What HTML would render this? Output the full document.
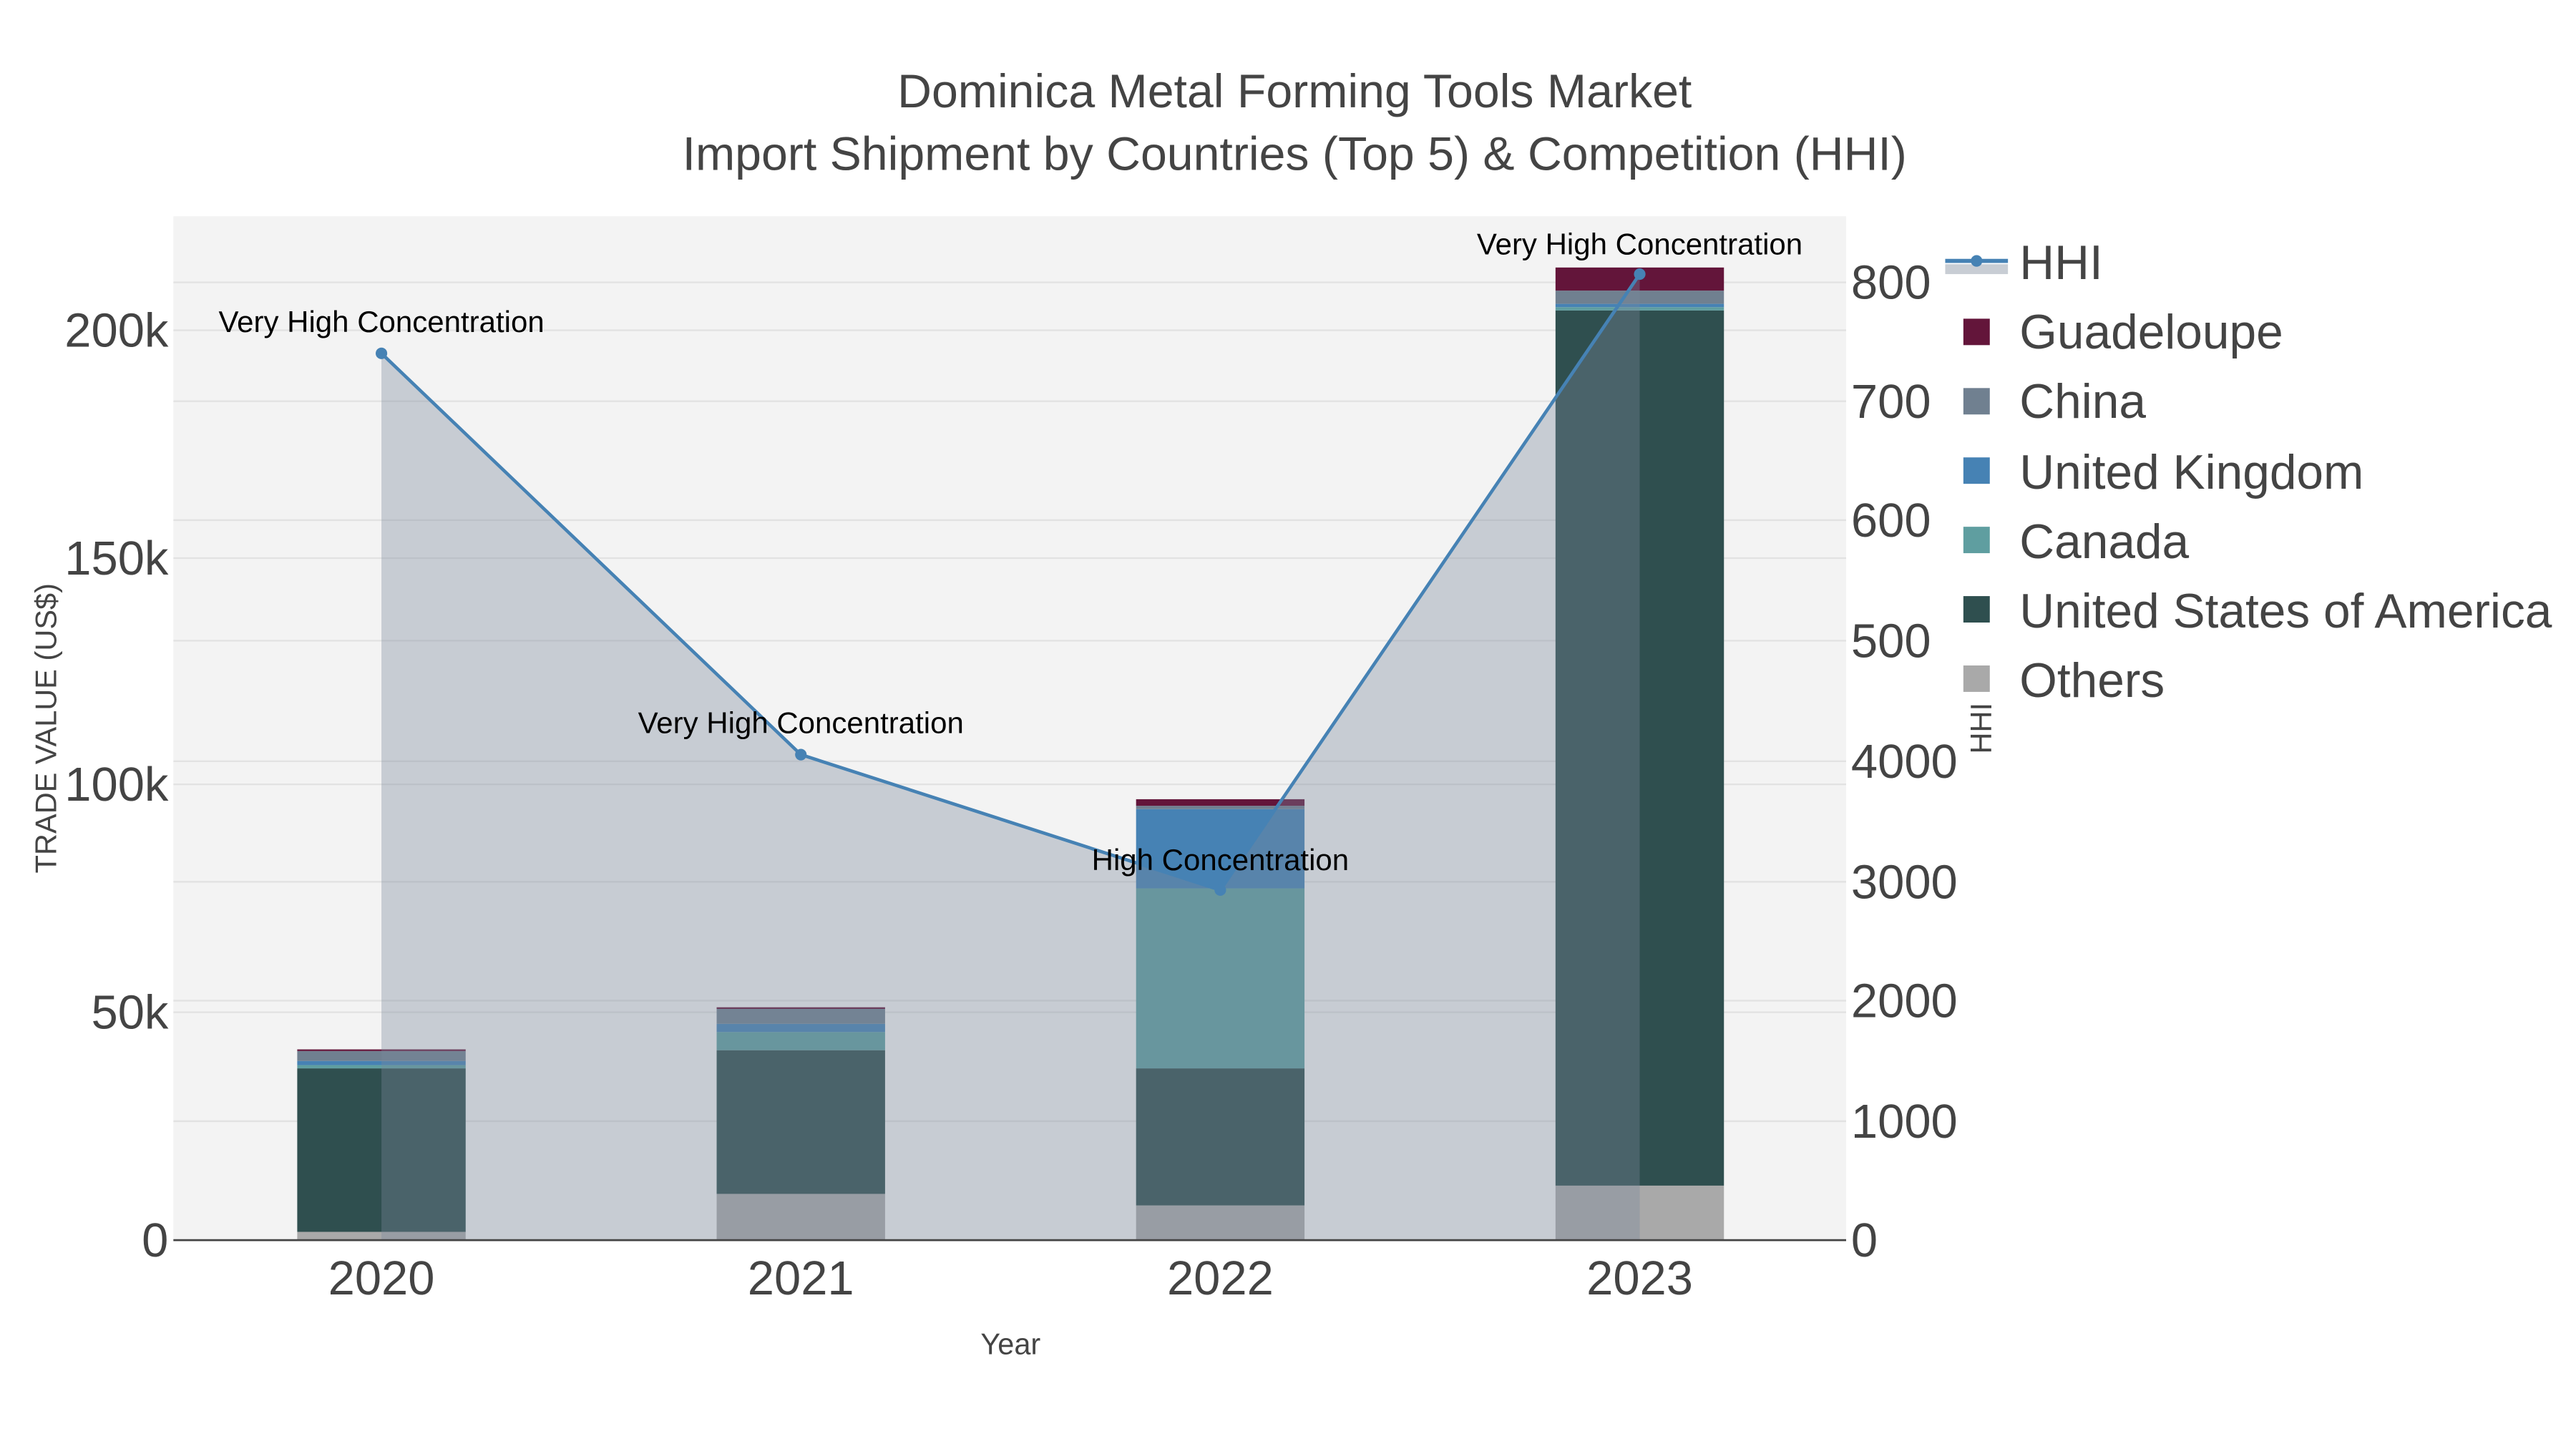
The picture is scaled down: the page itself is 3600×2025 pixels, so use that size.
<!DOCTYPE html>
<html><head><meta charset="utf-8"><style>html,body{margin:0;padding:0;background:#fff}svg{display:block}</style></head>
<body>
<svg width="3600" height="2025" viewBox="0 0 1560 877.5" xmlns="http://www.w3.org/2000/svg" font-family="'Liberation Sans', sans-serif">
<rect x="0" y="0" width="1560" height="877.5" fill="#fff"/>
<rect x="105" y="131" width="1013" height="620" fill="#f3f3f3"/>
<g stroke="#e2e2e2" stroke-width="1">
<line x1="105" x2="1118" y1="613" y2="613"/><line x1="105" x2="1118" y1="475" y2="475"/><line x1="105" x2="1118" y1="338" y2="338"/><line x1="105" x2="1118" y1="200" y2="200"/>
<line x1="105" x2="1118" y1="679" y2="679"/><line x1="105" x2="1118" y1="606" y2="606"/><line x1="105" x2="1118" y1="534" y2="534"/><line x1="105" x2="1118" y1="461" y2="461"/><line x1="105" x2="1118" y1="388" y2="388"/><line x1="105" x2="1118" y1="315" y2="315"/><line x1="105" x2="1118" y1="243" y2="243"/><line x1="105" x2="1118" y1="171" y2="171"/>
</g>
<g>
<rect x="180" y="746" width="102" height="5" fill="#a9a9a9"/>
<rect x="180" y="647" width="102" height="99" fill="#2f4f4f"/>
<rect x="180" y="645" width="102" height="2" fill="#5f9ea0"/>
<rect x="180" y="642.5" width="102" height="2.5" fill="#4682b4"/>
<rect x="180" y="636.5" width="102" height="6" fill="#708090"/>
<rect x="180" y="635.5" width="102" height="1" fill="#63153a"/>

<rect x="434" y="723" width="102" height="28" fill="#a9a9a9"/>
<rect x="434" y="636" width="102" height="87" fill="#2f4f4f"/>
<rect x="434" y="625" width="102" height="11" fill="#5f9ea0"/>
<rect x="434" y="620" width="102" height="5" fill="#4682b4"/>
<rect x="434" y="611" width="102" height="9" fill="#708090"/>
<rect x="434" y="610" width="102" height="1" fill="#63153a"/>

<rect x="688" y="730" width="102" height="21" fill="#a9a9a9"/>
<rect x="688" y="647" width="102" height="83" fill="#2f4f4f"/>
<rect x="688" y="538" width="102" height="109" fill="#5f9ea0"/>
<rect x="688" y="490" width="102" height="48" fill="#4682b4"/>
<rect x="688" y="488" width="102" height="2" fill="#708090"/>
<rect x="688" y="484" width="102" height="4" fill="#63153a"/>

<rect x="942" y="718" width="102" height="33" fill="#a9a9a9"/>
<rect x="942" y="188" width="102" height="530" fill="#2f4f4f"/>
<rect x="942" y="186" width="102" height="2" fill="#5f9ea0"/>
<rect x="942" y="184" width="102" height="2" fill="#4682b4"/>
<rect x="942" y="176" width="102" height="8" fill="#708090"/>
<rect x="942" y="162" width="102" height="14" fill="#63153a"/>
</g>
<polygon points="231,214 485,457 739,539 993,166 993,751 231,751" fill="rgb(123,137,156)" fill-opacity="0.36"/>
<polyline points="231,214 485,457 739,539 993,166" fill="none" stroke="#4682b4" stroke-width="2"/>
<g fill="#4682b4"><circle cx="231" cy="214" r="3.5"/><circle cx="485" cy="457" r="3.5"/><circle cx="739" cy="539" r="3.5"/><circle cx="993" cy="166" r="3.5"/></g>
<line x1="105" x2="1118" y1="751" y2="751" stroke="#444" stroke-width="1.2"/>
<g font-size="18.2" fill="#000" text-anchor="middle">
<text x="231" y="201">Very High Concentration</text>
<text x="485" y="444">Very High Concentration</text>
<text x="739" y="527">High Concentration</text>
<text x="993" y="154">Very High Concentration</text>
</g>
<g fill="#444" text-anchor="middle" font-size="28.7">
<text x="784" y="65">Dominica Metal Forming Tools Market</text>
<text x="784" y="103">Import Shipment by Countries (Top 5) &amp; Competition (HHI)</text>
</g>
<g fill="#444" font-size="29" text-anchor="end">
<text x="102" y="761">0</text><text x="102" y="623">50k</text><text x="102" y="485">100k</text><text x="102" y="348">150k</text><text x="102" y="210">200k</text>
</g>
<g fill="#444" font-size="29" text-anchor="start">
<text x="1121" y="761">0</text><text x="1121" y="689">1000</text><text x="1121" y="616">2000</text><text x="1121" y="544">3000</text><text x="1121" y="471">4000</text><text x="1121" y="398">500</text><text x="1121" y="325">600</text><text x="1121" y="253">700</text><text x="1121" y="181">800</text>
</g>
<g fill="#444" font-size="29" text-anchor="middle">
<text x="231" y="784">2020</text><text x="485" y="784">2021</text><text x="739" y="784">2022</text><text x="993" y="784">2023</text>
</g>
<text x="612" y="820" fill="#444" font-size="18" text-anchor="middle">Year</text>
<text transform="translate(34,441) rotate(-90)" fill="#444" font-size="18" text-anchor="middle">TRADE VALUE (US$)</text>
<text transform="translate(1206,441) rotate(-90)" fill="#444" font-size="18" text-anchor="middle">HHI</text>
<rect x="1178" y="160" width="38" height="6" fill="#c8cdd4"/>
<line x1="1178" x2="1216" y1="158" y2="158" stroke="#4682b4" stroke-width="2.5"/>
<circle cx="1197" cy="158" r="3.5" fill="#4682b4"/>
<rect x="1189" y="193" width="16" height="16" fill="#63153a"/>
<rect x="1189" y="235" width="16" height="16" fill="#708090"/>
<rect x="1189" y="277" width="16" height="16" fill="#4682b4"/>
<rect x="1189" y="319" width="16" height="16" fill="#5f9ea0"/>
<rect x="1189" y="361" width="16" height="16" fill="#2f4f4f"/>
<rect x="1189" y="403" width="16" height="16" fill="#a9a9a9"/>
<g fill="#444" font-size="29.3">
<text x="1223" y="169">HHI</text>
<text x="1223" y="211">Guadeloupe</text>
<text x="1223" y="253">China</text>
<text x="1223" y="296">United Kingdom</text>
<text x="1223" y="338">Canada</text>
<text x="1223" y="380">United States of America</text>
<text x="1223" y="422">Others</text>
</g>
</svg>
</body></html>
